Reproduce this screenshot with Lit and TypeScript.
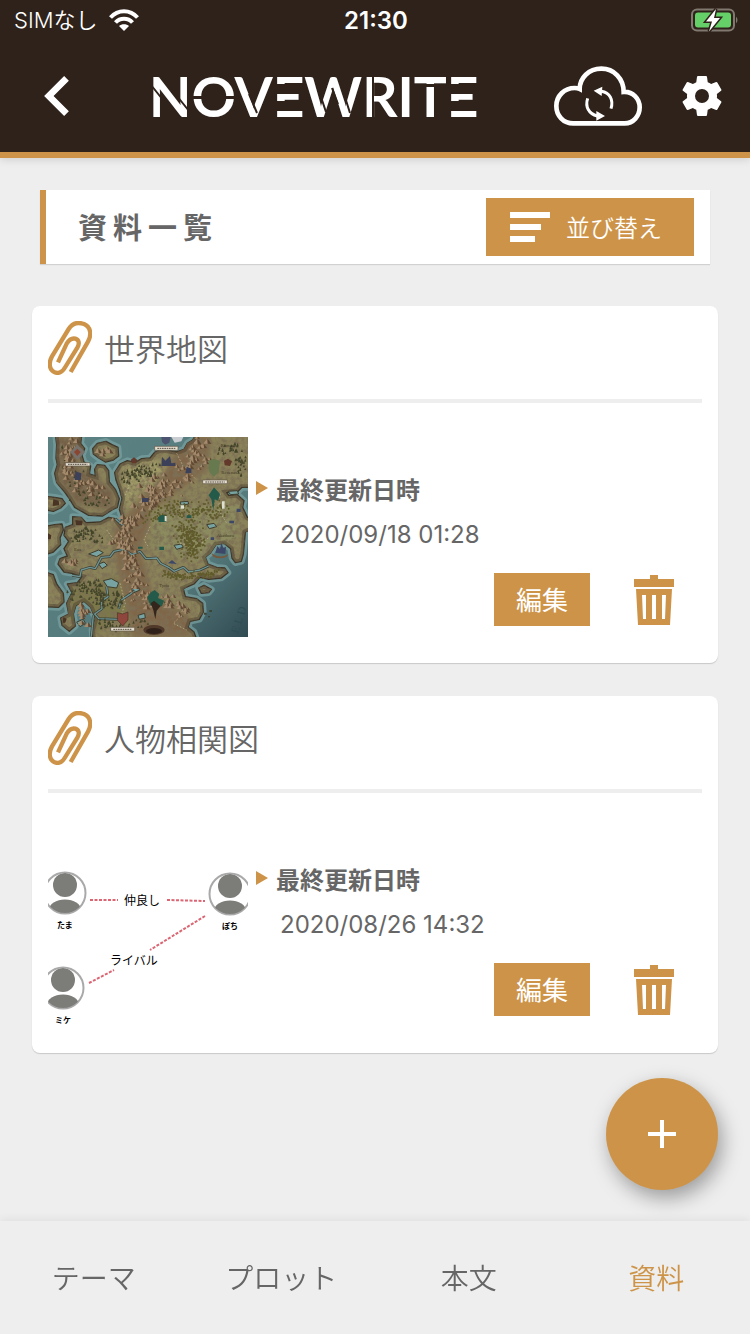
import { LitElement, html, svg, css } from "lit";
import { customElement, property } from "lit/decorators.js";

interface Material {
  title: string;
  updated: string;
  picture: "map" | "relations";
}

const materials: Material[] = [
  { title: "世界地図", updated: "2020/09/18 01:28", picture: "map" },
  { title: "人物相関図", updated: "2020/08/26 14:32", picture: "relations" },
];

const tabs = [
  { label: "テーマ", current: false },
  { label: "プロット", current: false },
  { label: "本文", current: false },
  { label: "資料", current: true },
];

/* Small seeded generator, so the terrain is the same on every render. */
function seeded(seed: number) {
  let s = seed;
  return () => {
    s = (s * 1664525 + 1013904223) % 4294967296;
    return s / 4294967296;
  };
}

/* Points spread around a polyline: [x, y] pairs, sorted from back to front. */
function spread(line: number[][], count: number, width: number, seed: number) {
  const rnd = seeded(seed);
  const out: number[][] = [];
  for (let i = 0; i < count; i++) {
    const t = rnd() * (line.length - 1);
    const k = Math.min(Math.floor(t), line.length - 2);
    const f = t - k;
    const x = line[k][0] + (line[k + 1][0] - line[k][0]) * f + (rnd() + rnd() - 1) * width;
    const y = line[k][1] + (line[k + 1][1] - line[k][1]) * f + (rnd() + rnd() - 1) * width;
    out.push([Math.round(x), Math.round(y), rnd()]);
  }
  return out.sort((a, b) => a[1] - b[1]);
}

const land =
  "M240 102L262 92L285 98L305 86L330 84L345 66L365 58L410 66L432 58L442 40L458 30L470 10H640V172L606 172L594 184L560 188L566 196L592 194L612 212L608 232L622 262L640 270V296L616 306L614 330L610 372L604 394L586 398L576 384L572 356L552 340L528 344L512 368L496 382L504 402L530 412L554 414L564 428L544 444L506 448L480 442L462 462L430 476L436 500L470 506L488 520L490 546L478 568L450 574L444 592L462 606L474 640H160L156 600L166 566L152 532L132 514L108 526L100 552L106 588L88 604L66 586L62 564L86 552L80 520L96 488L82 462L112 458L126 440L96 430L72 426L54 402L60 386L82 378L72 356L86 334L72 316L76 292L98 284L98 260L124 262L138 278L180 276L206 262L226 266L240 284L246 262L238 238L246 206L238 176L228 150L224 128Z" +
  "M46 10L50 44L48 84L52 104L44 130L50 158L74 186L88 206L104 232L146 256L188 258L216 240L232 232L238 206L226 178L208 156L206 122L194 106L172 104L164 118L166 138L148 132L152 108L132 96L126 76L134 56L122 40L126 10Z" +
  "M158 56L172 40L198 34L216 44L234 52L236 78L220 90L196 96L176 84L160 72Z" +
  "M10 198L44 202L66 206L76 220L62 234L40 244L10 238Z" +
  "M10 290L44 284L66 282L70 300L60 324L62 344L40 366L10 376Z" +
  "M10 424L40 434L50 462L70 490L72 516L56 532L10 530Z" +
  "M476 474L492 466L514 478L506 488L484 490Z";

const lakes =
  "M420 216L444 214L446 222L424 226ZM500 284L522 280L530 290L508 296ZM402 346L424 342L430 352L410 358ZM146 372L176 360L190 368L170 380ZM176 402L192 396L202 406L186 416ZM190 452L214 446L236 458L230 474L202 470ZM274 478L296 472L300 480L282 488ZM294 556L314 550L316 564L298 568ZM110 576L130 568L136 580L120 590ZM564 184L592 182L596 192L572 194Z";

const rivers =
  "M96 436L120 440L124 420L150 412L166 416L184 382L210 380L222 364L250 358L276 374L300 364L318 386L350 384L362 400L386 412L402 424L430 412L446 426L480 420L506 408M226 266L248 286M200 470L204 500L184 514L186 536L164 552L176 566L236 568M236 536L244 510L268 494L284 482M160 556L154 620";

const roads =
  "M256 196L266 170L258 148L300 120L340 136M200 300L222 330L250 350M330 290L312 330L326 352M540 190L536 240L560 280M420 340L470 350L510 320M240 460L256 520L246 548M420 560L400 580L440 600M410 70L430 110L470 150";

const ridge = spread([[480, 48], [476, 96], [430, 140], [370, 176], [330, 210], [270, 290], [244, 320], [270, 372], [286, 430], [300, 490]], 210, 42, 7);
const hills = spread([[90, 40], [84, 110], [120, 170], [190, 190]], 60, 34, 19)
  .concat(spread([[190, 50], [200, 80]], 8, 20, 29))
  .concat(spread([[310, 510], [390, 520], [440, 560]], 40, 26, 23))
  .concat(spread([[80, 400], [110, 402]], 8, 14, 31))
  .concat(spread([[128, 526], [134, 600]], 20, 16, 37));
const woods = spread([[250, 150], [300, 130], [340, 126]], 70, 26, 3)
  .concat(spread([[80, 60], [120, 200], [200, 220]], 60, 34, 41))
  .concat(spread([[100, 330], [130, 310], [180, 330]], 60, 22, 43))
  .concat(spread([[100, 490], [160, 470], [190, 520], [250, 500]], 130, 30, 47))
  .concat(spread([[530, 70], [600, 60], [600, 130]], 50, 20, 53))
  .concat(spread([[190, 580], [240, 600], [330, 570]], 40, 20, 59));
const groves = spread([[330, 260], [400, 230], [480, 250], [560, 230]], 190, 34, 61)
  .concat(spread([[430, 300], [470, 330], [450, 370]], 220, 36, 67))
  .concat(spread([[370, 432], [430, 440], [530, 430]], 100, 14, 71));

const mountain = ([x, y, r]: number[]) => {
  const h = 7 + r * 9;
  return svg`<path class="lit" d="M${x - h * 0.8} ${y}L${x} ${y - h}L${x + 2} ${y}Z"/><path class="dim" d="M${x} ${y - h}L${x + h * 0.8} ${y + 1}L${x + 1} ${y}Z"/>`;
};

@customElement("world-map")
export class WorldMap extends LitElement {
  static styles = css`
    :host { display: block; }
    svg { display: block; width: 100%; height: 100%; }
    .lit { fill: #a58b6d; }
    .dim { fill: #5f4934; }
    .tree { fill: #43452a; }
    .grove { fill: #605b2c; }
    .banner { fill: #e6dfd0; stroke: #5b5142; stroke-width: 2; }
    .castle { fill: #3d4868; }
    .green { fill: #235a49; }
    .name { font: 14px "Liberation Serif", serif; fill: #3b3422; }
    .ocean { font: 34px "Liberation Serif", serif; fill: #2f4d54; }
  `;

  render() {
    return html`<svg viewBox="24 21 600 600" role="img" aria-label="世界地図">
      <defs>
        <linearGradient id="sea" x1="0" y1="0" x2="1" y2="1">
          <stop offset="0" stop-color="#5c8284" /><stop offset="0.7" stop-color="#557a7c" /><stop offset="1" stop-color="#314b52" />
        </linearGradient>
        <filter id="soft"><feGaussianBlur stdDeviation="8" /></filter>
        <filter id="ground" x="0" y="0" width="1" height="1">
          <feTurbulence type="fractalNoise" baseFrequency="0.07" numOctaves="4" seed="4" />
          <feColorMatrix values="0 0 0 0 0.2  0 0 0 0 0.16  0 0 0 0 0.09  2.6 0 0 0 -1" />
        </filter>
        <clipPath id="coast"><path d=${land} /></clipPath>
      </defs>
      <rect x="24" y="21" width="600" height="600" fill="url(#sea)" />
      <path d=${land} fill="none" stroke="#7ba3a2" stroke-width="20" stroke-linejoin="round" opacity="0.7" />
      <path d=${land} fill="#8a8259" stroke="#3b3426" stroke-width="4" stroke-linejoin="round" />
      <g clip-path="url(#coast)">
        <g filter="url(#soft)">
          <path d="M250 110L350 90L420 140L300 180L260 240Z" fill="#a09b68" />
          <path d="M440 20L510 20L500 120L350 230L300 360L340 500L450 560V621H280L230 400L220 300L340 170Z" fill="#80664a" />
          <path d="M330 240L600 220L590 320L500 400L340 360Z" fill="#8b8b5f" />
          <path d="M40 20H130L110 110L220 180L220 240L110 220L50 150Z" fill="#756046" />
          <path d="M80 480L230 440L260 540L170 610L80 560Z" fill="#7c794a" />
        </g>
        <rect x="24" y="21" width="600" height="600" filter="url(#ground)" />
        <path d=${land} fill="none" stroke="#43372a" stroke-width="18" opacity="0.4" />
      </g>
      <path d=${lakes} fill="#77a3a3" stroke="#403e2c" stroke-width="3" />
      <path d=${rivers} fill="none" stroke="#3a3f35" stroke-width="8" stroke-linejoin="round" />
      <path d=${rivers} fill="none" stroke="#6d9494" stroke-width="4" stroke-linejoin="round" />
      <path d=${roads} fill="none" stroke="#c6bf98" stroke-width="2" stroke-dasharray="5 5" />
      ${groves.map(([x, y]) => svg`<circle class="grove" cx=${x} cy=${y} r="3"/>`)}
      ${woods.map(([x, y, r]) => svg`<path class="tree" d="M${x - 3} ${y}L${x + 1} ${y - 6 - r * 5}L${x + 4} ${y}Z"/>`)}
      ${hills.map(mountain)} ${ridge.map(mountain)}
      <path d="M364 21H392L388 38L376 44L366 36Z" fill="#4d5470" />
      <path d="M394 21H430L424 34L404 38Z" fill="#c9cdd2" />
      <path d="M112 44L136 66L112 90L90 66Z" fill="#77736c" />
      <path d="M112 56L122 66L112 78L102 66Z" fill="#8a4630" />
      <path d="M106 124L124 130L122 150L104 150ZM366 80L376 92L390 78L394 100L406 98V108H364ZM440 110L454 116V130H436ZM306 204H326V216H306Z" fill="#3c4159" />
      <path d="M272 90L282 82L292 90L288 100H276ZM552 92L564 86L576 94L570 108L554 106Z" fill="#62392a" />
      <path d="M506 92L522 86L540 94L536 126L522 140L508 126Z" fill="#66794f" />
      <path class="green" d="M506 196L522 172L540 192L534 212L524 208L520 240L514 208ZM354 262L366 254L380 258L378 276H356ZM358 350H372V360H358ZM294 350H308V356H294ZM440 256H454V264H440Z" />
      <path d="M546 214H554V236H546ZM374 258H380V274H374ZM422 226H432V236H422Z" fill="#dedfd2" />
      <path class="castle" d="M526 368L532 348L540 358L544 338L550 354L558 350L556 372ZM384 400L396 390L410 402ZM568 272H582V280H568ZM590 236H602V246H590ZM512 322H522V330H512Z" />
      <path d="M514 370Q540 388 566 372L560 380Q540 390 520 380Z" fill="#76583c" />
      <path class="green" d="M322 500L334 486L344 480L358 492L354 504L372 512L366 528L350 532L330 526Z" />
      <path d="M332 520L342 512L362 528L350 542L346 568L340 540Z" fill="#33251b" />
      <ellipse cx="342" cy="600" rx="32" ry="15" fill="#50392a" />
      <ellipse cx="342" cy="603" rx="24" ry="9" fill="#2f211a" />
      <path d="M232 548L248 552L264 546V570L248 588L232 570Z" fill="#8f473d" stroke="#473025" stroke-width="2" />
      <path d="M40 208L56 212L58 226L38 228ZM106 270L128 272L126 286H108ZM70 562L80 566L76 578H68ZM24 310L34 316L32 328H24Z" fill="#493324" />
      <path d="M492 548H500V554H492ZM508 540H516V546H508ZM504 558H510V562H504Z" fill="#3b4435" />
      <path class="banner" d="M76 98H150V108H76ZM344 49H414V61H344ZM488 150H562V161H488ZM212 592H284V603H212Z" />
      <path d="M84 103H142M352 55H406M496 156H554M220 598H276" stroke="#544c40" stroke-width="3" stroke-dasharray="5 2" />
      <text class="name" x="542" y="51">Romaris</text>
      <text class="name" x="544" y="132">Revenas</text>
      <text class="name" x="530" y="320">Akathora</text>
      <text class="name" x="358" y="470">Tyria</text>
      <text class="name" x="102" y="362">Eos</text>
      <text class="ocean" transform="translate(594 612) rotate(-72)">E L D</text>
    </svg>`;
  }
}

@customElement("relation-chart")
export class RelationChart extends LitElement {
  static styles = css`
    :host { display: block; }
    svg { display: block; width: 100%; height: 100%; }
    text { font-family: "Noto Sans CJK JP", sans-serif; text-anchor: middle; fill: #000; }
    .link { font-size: 12px; }
    .name { font-size: 8px; font-weight: 700; }
    .tie { stroke: #db6673; stroke-width: 2; stroke-dasharray: 3 1.5; }
    .ring { fill: #fff; stroke: #a9a9a9; stroke-width: 2; }
    .body { fill: #7c7d79; }
  `;

  person(x: number, y: number, name: string, id: string) {
    return svg`
      <clipPath id=${id}><circle cx=${x} cy=${y} r="20"/></clipPath>
      <circle class="ring" cx=${x} cy=${y} r="20.5"/>
      <g clip-path="url(#${id})">
        <circle class="body" cx=${x} cy=${y - 8} r="12"/>
        <ellipse class="body" cx=${x} cy=${y + 17} rx="16" ry="10.5"/>
      </g>
      <text class="name" x=${x} y=${y + 35}>${name}</text>`;
  }

  render() {
    return html`<svg viewBox="0 0 200 200" role="img" aria-label="人物相関図">
      <path class="tie" fill="none" d="M42 73H70M119 73L157 74M157 89L102 123M41 156L66 143" />
      ${this.person(17, 66, "たま", "tama")}
      ${this.person(182, 67, "ぽち", "pochi")}
      ${this.person(15, 161, "ミケ", "mike")}
      <text class="link" x="94" y="78">仲良し</text>
      <text class="link" x="86" y="138">ライバル</text>
    </svg>`;
  }
}

@customElement("brand-logo")
export class BrandLogo extends LitElement {
  static styles = css`
    :host { display: block; }
    svg { display: block; }
    text { font-family: Lato, sans-serif; font-size: 55px; font-weight: 700; fill: #fff; }
    .gaps { fill: #2e221a; }
    .cuts { fill: none; stroke: #2e221a; stroke-width: 2; }
  `;

  /* The wordmark is set in type; stencil gaps in the bar's colour lie over it. */
  render() {
    return html`<svg width="336" height="84" viewBox="0 -12 336 84" role="img" aria-label="NOVEWRITE">
      <text x="0" y="51">NOVEWRITE</text>
      <path class="gaps" d="M43 30H87V33H43ZM126 18H144V28H126ZM126 35H144V45H126ZM299 18H319V28H299ZM299 35H319V45H299ZM264 18H298V21H264Z" />
      <path class="cuts" d="M2 19L14 34M28 30L40 45M100 28L108 47M171 28L177 46M183 22L189 38M195 28L201 47M224 10V52" />
    </svg>`;
  }
}

@customElement("material-card")
export class MaterialCard extends LitElement {
  @property({ attribute: false }) item!: Material;

  static styles = css`
    :host {
      display: block;
      background: #fff;
      border-radius: 8px;
      box-shadow: 0 1px 1px rgba(0, 0, 0, 0.16);
      padding: 0 16px 26px;
    }
    header {
      display: flex;
      align-items: center;
      gap: 12px;
      height: 83px;
      padding-bottom: 10px;
      border-bottom: 4px solid #eee;
    }
    h2 { margin: 0; font-size: 31px; font-weight: 350; line-height: 40px; }
    .clip { flex: none; width: 44px; height: 54px; }
    .body { display: flex; gap: 8px; padding-top: 34px; }
    .thumb { flex: none; width: 200px; height: 200px; }
    .info { flex: 1; display: flex; flex-direction: column; padding-top: 33px; }
    .label { display: flex; align-items: center; gap: 8px; height: 36px; font-size: 24px; font-weight: 700; }
    .arrow { width: 12px; height: 14px; }
    time { font-family: Inter, sans-serif; font-size: 24px; line-height: 32px; padding: 13px 0 0 24px; }
    .actions { display: flex; justify-content: flex-end; align-items: center; gap: 44px; padding: 22px 28px 0 0; }
    button { font: inherit; border: 0; padding: 0; margin: 0; cursor: pointer; }
    .edit { width: 96px; height: 53px; background: #cd9449; color: #fff; font-size: 26px; line-height: 50px; padding-bottom: 2px; }
    .trash { width: 40px; height: 50px; background: none; }
    svg { display: block; }
  `;

  render() {
    return html`
      <header>
        <svg class="clip" viewBox="54 422 132 162" fill="none" stroke="#cd9449" stroke-width="13" aria-hidden="true">
          <path d="M122 575L174 484C186 462 182 440 162 431C142 424 126 430 116 446L66 528C56 546 56 568 74 576C88 581 98 573 104 563L142 502C150 488 146 478 136 475C124 472 116 480 110 490L84 546" />
        </svg>
        <h2>${this.item.title}</h2>
      </header>
      <div class="body">
        ${this.item.picture === "map"
          ? html`<world-map class="thumb"></world-map>`
          : html`<relation-chart class="thumb"></relation-chart>`}
        <div class="info">
          <div class="label">
            <svg class="arrow" viewBox="0 0 12 14" fill="#cd9449" aria-hidden="true"><path d="M0 0L12 7L0 14Z" /></svg>
            最終更新日時
          </div>
          <time>${this.item.updated}</time>
          <div class="actions">
            <button class="edit">編集</button>
            <button class="trash" aria-label="削除">
              <svg width="40" height="50" viewBox="0 0 40 50" fill="#cd9449">
                <path d="M16 0H24V4H40V12H0V4H16Z" />
                <path fill-rule="evenodd" d="M2 14H38L36 50H4ZM8 20L9 44H12V20ZM18 20V44H22V20ZM28 20V44H31L32 20Z" />
              </svg>
            </button>
          </div>
        </div>
      </div>
    `;
  }
}

@customElement("app-root")
export class AppRoot extends LitElement {
  static styles = css`
    :host {
      display: flex;
      flex-direction: column;
      min-height: 100vh;
      background: #eee;
      color: #666;
      font-family: "Noto Sans CJK JP", sans-serif;
      font-weight: 400;
    }
    svg { display: block; }
    button { font: inherit; border: 0; padding: 0; margin: 0; background: none; cursor: pointer; }
    .top {
      background: #2e221a;
      color: #fff;
      border-bottom: 6px solid #cd9449;
      box-shadow: 0 2px 8px rgba(0, 0, 0, 0.12);
    }
    .status {
      display: grid;
      grid-template-columns: 1fr auto 1fr;
      align-items: center;
      height: 40px;
      padding: 0 12px 0 14px;
      font-family: Inter, "Noto Sans CJK JP", sans-serif;
    }
    .carrier { display: flex; align-items: center; gap: 12px; font-size: 22px; font-weight: 350; line-height: 32px; }
    .clock { font-size: 24px; font-weight: 600; }
    .battery { justify-self: end; }
    .bar { display: flex; align-items: center; height: 112px; padding: 0 24px 0 44px; }
    .logo { margin: 0 auto; padding-left: 10px; }
    .tools { display: flex; align-items: center; gap: 36px; }
    main { flex: 1; padding: 32px 32px 168px; display: flex; flex-direction: column; gap: 33px; }
    .heading {
      display: flex;
      align-items: center;
      justify-content: space-between;
      margin: 0 8px 9px;
      padding: 8px 16px 8px 32px;
      background: #fff;
      border-left: 6px solid #cd9449;
      box-shadow: 0 1px 1px rgba(0, 0, 0, 0.12);
    }
    h1 { margin: 0; padding-bottom: 2px; font-size: 29px; font-weight: 700; line-height: 40px; letter-spacing: 6px; }
    .sort {
      display: flex;
      align-items: center;
      gap: 16px;
      height: 58px;
      padding: 0 32px 0 24px;
      background: #cd9449;
      color: #fff;
      font-size: 24px;
      font-weight: 350;
    }
    .sort span { padding-bottom: 2px; }
    .add {
      position: fixed;
      right: 32px;
      bottom: 144px;
      width: 112px;
      height: 112px;
      border-radius: 50%;
      display: grid;
      place-items: center;
      background: #cd9449;
      box-shadow: 4px 8px 20px rgba(0, 0, 0, 0.35);
    }
    nav {
      position: sticky;
      bottom: 0;
      display: grid;
      grid-template-columns: repeat(4, 1fr);
      height: 113px;
      background: #eee;
      box-shadow: 0 -2px 8px rgba(0, 0, 0, 0.06);
    }
    nav a {
      display: grid;
      place-items: center;
      padding-bottom: 2px;
      color: #666;
      font-size: 28px;
      font-weight: 350;
      text-decoration: none;
    }
    nav a.current { color: #cd9449; }
  `;

  render() {
    return html`
      <div class="top">
        <div class="status">
          <span class="carrier">SIMなし
            <svg width="30" height="22" viewBox="0 0 30 22" fill="none" stroke="#fff" stroke-width="4" aria-hidden="true">
              <path d="M1.5 8.5C9 0.2 21 0.2 28.500 8.500" />
              <path d="M6.500 13.500C11 8.500 19 8.500 23.500 13.500" />
              <path d="M10 17C12.500 14.500 17.500 14.500 20 17L15 22Z" fill="#fff" stroke="none" />
            </svg>
          </span>
          <span class="clock">21:30</span>
          <svg class="battery" width="48" height="24" viewBox="0 0 48 24" aria-hidden="true">
            <rect x="2" y="1.500" width="42" height="21" rx="5" fill="none" stroke="#81796f" stroke-width="2" />
            <rect x="5" y="4.500" width="36" height="15" rx="3" fill="#65cf68" />
            <path d="M46 8.500Q49 12 46 15.500Z" fill="#81796f" />
            <path d="M26 1L16 13.500H22L19 23.500L30 10H24Z" fill="#fff" stroke="#2e221a" stroke-width="3" paint-order="stroke" />
          </svg>
        </div>
        <div class="bar">
          <button aria-label="戻る">
            <svg width="25" height="40" viewBox="8 6 7.41 12" fill="#fff"><path d="M15.410 7.410L14 6l-6 6 6 6 1.410-1.410L10.830 12z" /></svg>
          </button>
          <brand-logo class="logo"></brand-logo>
          <div class="tools">
            <button aria-label="同期">
              <svg width="88" height="60" viewBox="72 198 264 180" fill="none" stroke="#fff">
                <path stroke-width="14" d="M130 370C100 370 79 347 79 318C79 288 103 264 134 264C140 264 145 265 149 267C149 234 176 206 214 206C252 206 281 236 281 276C308 274 329 296 329 322C329 348 310 370 284 370Z" />
                <path stroke-width="9" d="M243 326C251 300 240 278 214 274M173 295C165 320 176 342 202 348" />
                <path fill="#fff" stroke="none" d="M191 272L217 260L215 288ZM225 348L199 333V362Z" />
              </svg>
            </button>
            <button aria-label="設定">
              <svg width="48" height="48" viewBox="0 0 24 24" fill="#fff"><path d="M19.430 12.980c.04-.32.07-.64.07-.98s-.03-.66-.07-.98l2.110-1.650c.19-.15.24-.42.12-.64l-2-3.460c-.12-.22-.39-.3-.61-.22l-2.490 1c-.52-.4-1.080-.73-1.690-.98l-.38-2.650C14.460 2.180 14.250 2 14 2h-4c-.25 0-.46.18-.49.42l-.38 2.650c-.61.25-1.170.59-1.690.98l-2.490-1c-.23-.09-.49 0-.61.22l-2 3.460c-.13.22-.07.49.12.64l2.110 1.650c-.04.32-.07.65-.07.98s.03.66.07.98l-2.110 1.650c-.19.15-.24.42-.12.64l2 3.460c.12.22.39.3.61.22l2.490-1c.52.4 1.080.73 1.690.98l.38 2.650c.03.24.24.42.49.42h4c.25 0 .46-.18.49-.42l.38-2.650c.61-.25 1.170-.59 1.690-.98l2.490 1c.23.09.49 0 .61-.22l2-3.460c.12-.22.07-.49-.12-.64zM12 15.500A3.500 3.500 0 1 1 12 8.500A3.500 3.500 0 0 1 12 15.500z" /></svg>
            </button>
          </div>
        </div>
      </div>

      <main>
        <div class="heading">
          <h1>資料一覧</h1>
          <button class="sort">
            <svg width="40" height="30" viewBox="0 0 40 30" fill="#fff" aria-hidden="true"><path d="M0 0H40V6H0ZM0 12H31V18H0ZM0 24H25V30H0Z" /></svg>
            <span>並び替え</span>
          </button>
        </div>
        ${materials.map((item) => html`<material-card .item=${item}></material-card>`)}
      </main>

      <button class="add" aria-label="追加">
        <svg width="48" height="48" viewBox="0 0 24 24" fill="#fff"><path d="M19 13h-6v6h-2v-6H5v-2h6V5h2v6h6z" /></svg>
      </button>
      <nav>
        ${tabs.map((t) => html`<a href="#" class=${t.current ? "current" : ""}>${t.label}</a>`)}
      </nav>
    `;
  }
}
